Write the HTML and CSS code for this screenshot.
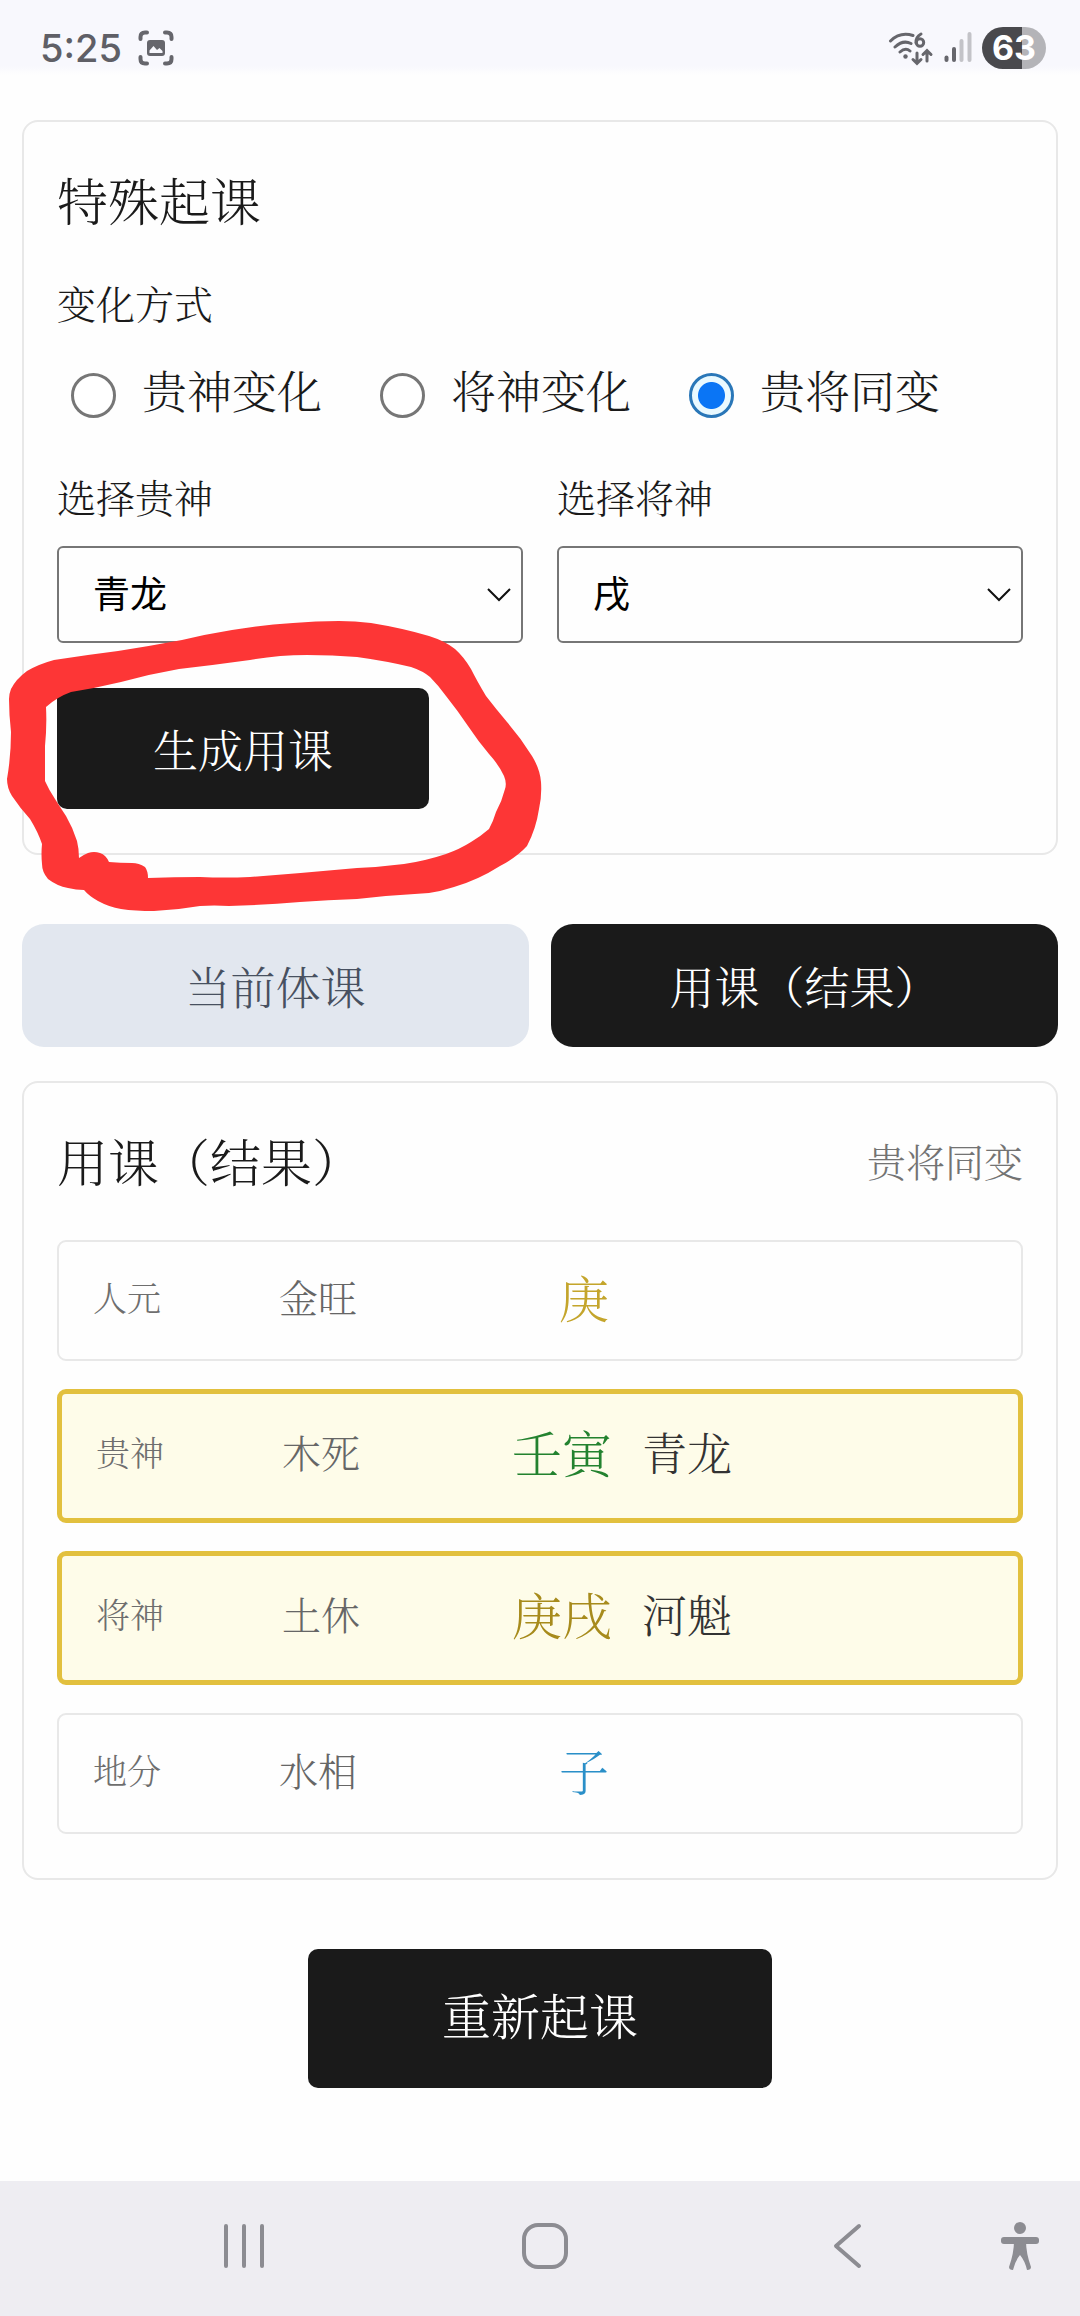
FILE: index.html
```html
<!DOCTYPE html>
<html lang="zh-CN">
<head>
<meta charset="utf-8">
<meta name="viewport" content="width=device-width, initial-scale=1">
<title>特殊起课</title>
<link rel="stylesheet" href="styles.css">
</head>
<body>
<header class="status">
  <div class="status-group">
    <span class="clock">5:25</span>
    <svg class="capture-icon" width="36" height="36" viewBox="0 0 36 36" fill="none" stroke="#66666c" stroke-width="4" stroke-linecap="round" aria-hidden="true">
      <path d="M2.500 9V7Q2.500 2.500 7 2.500H9M27 2.500h2Q33.500 2.500 33.500 7V9M33.500 27v2Q33.500 33.500 29 33.500H27M9 33.500H7Q2.500 33.500 2.500 29V27"/>
      <rect x="9" y="10" width="18" height="16" rx="3" fill="#66666c" stroke="none"/>
      <path d="M11.500 23V20.500L15.500 16L19 20L21.500 18L24.500 21V23Z" fill="#f8f8fd" stroke="none"/>
    </svg>
  </div>
  <div class="status-group status-right">
    <svg width="46" height="36" viewBox="0 0 46 36" fill="none" stroke="#66666c" stroke-width="3" stroke-linecap="round" aria-hidden="true">
      <path d="M2.500 11Q12 1.500 25 5.500M7 17Q15 9.500 23 13.500M12 22Q17.500 17 22 21"/>
      <circle cx="17.500" cy="26.500" r="2.200" fill="#66666c" stroke="none"/>
      <path d="M33 4Q27.500 7 28 13"/><circle cx="32" cy="12.500" r="3.700"/>
      <path d="M29 23V33M25 29.500L29 33.500L33 29.500M39 31V21M35 24.500L39 20.500L43 24.500"/>
    </svg>
    <svg width="28" height="36" viewBox="0 0 28 36" stroke-width="4" stroke-linecap="round" aria-hidden="true">
      <path d="M2.500 27.500V30" stroke="#66666c"/><path d="M10 19V30" stroke="#66666c"/>
      <path d="M17.500 11V30M25.500 4V30" stroke="#c3c3c8"/>
    </svg>
    <span class="battery">63</span>
  </div>
</header>

<main class="page">
  <form class="card setup">
    <h2 class="title">特殊起课</h2>
    <fieldset class="modes">
      <legend class="caption">变化方式</legend>
      <div class="mode-list">
        <label class="mode"><input class="radio" type="radio" name="mode">贵神变化</label>
        <label class="mode"><input class="radio" type="radio" name="mode">将神变化</label>
        <label class="mode"><input class="radio" type="radio" name="mode" checked>贵将同变</label>
      </div>
    </fieldset>
    <div class="fields">
      <div class="field">
        <label class="caption" for="gui">选择贵神</label>
        <div class="select-box">
          <select class="select" id="gui"><option>青龙</option></select>
          <svg class="chevron" width="24" height="14" viewBox="0 0 24 14" aria-hidden="true"><path d="M1 1L12 12L23 1"/></svg>
        </div>
      </div>
      <div class="field">
        <label class="caption" for="jiang">选择将神</label>
        <div class="select-box">
          <select class="select" id="jiang"><option>戌</option></select>
          <svg class="chevron" width="24" height="14" viewBox="0 0 24 14" aria-hidden="true"><path d="M1 1L12 12L23 1"/></svg>
        </div>
      </div>
    </div>
    <button class="btn" type="button">生成用课</button>
    <svg class="marker" width="560" height="320" viewBox="0 0 560 320" aria-hidden="true">
      <path fill-rule="evenodd" d="M9 100Q9 95 11 90Q16 80 27 72Q39 65 54 61Q86 56 118 52Q150 47 182 41Q207 35 232 31Q262 26 293 24Q316 22 339 22Q355 22 371 24Q402 29 429 37Q445 42 455 50Q464 58 471 70Q477 82 486 97Q496 110 507 123Q521 139 532 157Q540 170 541 183Q542 197 539 210Q536 230 527 247Q517 258 500 267Q478 281 454 288Q442 292 429 294Q393 296 357 300Q328 301 300 303Q264 306 229 307Q214 306 200 307Q177 311 154 312Q135 312 121 310Q109 308 98 302Q89 297 84 291Q76 291 68 289Q57 287 48 280Q42 273 42 265Q41 255 42 245Q38 233 30 220Q20 209 12 197Q7 189 7 180Q11 157 11 133Q9 116 9 100Z
      M46 108Q57 98 71 93Q96 89 121 83Q150 75 179 70Q214 66 250 61Q278 56 307 56Q332 56 357 58Q386 62 411 68Q423 72 430 78Q438 86 446 97Q458 112 468 127Q478 142 489 155Q499 166 504 177Q507 184 505 190Q502 202 496 213Q493 223 489 230Q481 237 471 243Q460 250 446 255Q425 262 404 265Q380 268 357 269Q303 274 250 278Q225 279 200 278Q174 278 148 279Q148 272 145 268Q139 264 132 264Q120 264 109 263Q106 256 100 254Q94 252 88 254Q83 256 79 259Q79 250 77 242Q73 229 66 217Q60 208 55 200Q49 191 45 182Q45 164 45 147Q47 127 46 108Z"/>
    </svg>
  </form>

  <div class="tabs" role="tablist">
    <button class="tab" type="button" role="tab" aria-selected="false">当前体课</button>
    <button class="tab tab-active" type="button" role="tab" aria-selected="true">用课（结果）</button>
  </div>

  <section class="card">
    <div class="card-head">
      <h2 class="title">用课（结果）</h2>
      <span class="caption muted">贵将同变</span>
    </div>
    <ul class="rows">
      <li class="row"><span class="pos">人元</span><span class="state">金旺</span><span class="stem gold">庚</span></li>
      <li class="row row-changed"><span class="pos">贵神</span><span class="state">木死</span><span class="stem green">壬寅</span><span class="spirit">青龙</span></li>
      <li class="row row-changed"><span class="pos">将神</span><span class="state">土休</span><span class="stem earth">庚戌</span><span class="spirit">河魁</span></li>
      <li class="row"><span class="pos">地分</span><span class="state">水相</span><span class="stem blue">子</span></li>
    </ul>
  </section>

  <button class="btn btn-restart" type="button">重新起课</button>
</main>

<nav class="navbar">
  <button class="nav-btn" type="button" aria-label="最近任务">
    <svg width="42" height="46" viewBox="0 0 42 46"><path d="M3 3V43M21 3V43M39 3V43" stroke-width="4"/></svg>
  </button>
  <button class="nav-btn" type="button" aria-label="主屏幕">
    <svg width="46" height="46" viewBox="0 0 46 46"><rect x="2" y="2" width="42" height="42" rx="14" stroke-width="4"/></svg>
  </button>
  <button class="nav-btn" type="button" aria-label="返回">
    <svg width="30" height="46" viewBox="0 0 30 46"><path d="M27 3L4 23L27 43" stroke-width="4"/></svg>
  </button>
  <button class="nav-btn" type="button" aria-label="无障碍">
    <svg width="40" height="50" viewBox="0 0 40 50"><g fill="#8c8c92" stroke="none"><circle cx="20" cy="7" r="6"/><rect x="1" y="16" width="38" height="7" rx="3"/><path d="M14 20H26Q26 32 31 46Q31 49 27 49Q25 40 20 34Q15 40 13 49Q9 49 9 46Q14 32 14 20Z"/></g></svg>
  </button>
</nav>
</body>
</html>
```
FILE: styles.css
```css
* {
  box-sizing: border-box;
}

body {
  margin: 0;
  min-height: 100vh;
  display: flex;
  flex-direction: column;
  background: #fefefe;
  color: #1a1a1a;
  font-family: "Noto Serif CJK SC", "Noto Serif SC", "Noto Sans CJK SC", serif;
  font-size: 45px;
  font-weight: 300;
  line-height: 81px;
}

button,
input,
select {
  font: inherit;
  color: inherit;
  margin: 0;
}

svg {
  display: block;
}

/* Status bar */
.status {
  height: 75px;
  padding: 22px 34px 0 40px;
  display: flex;
  align-items: flex-start;
  justify-content: space-between;
  background: linear-gradient(#f8f8fd 88%, #fefefe);
  color: #5f5f66;
  font-family: Inter, sans-serif;
  line-height: 52px;
}

.status-group {
  display: flex;
  align-items: center;
  gap: 16px;
  height: 52px;
}

.status-right {
  gap: 10px;
}

.clock {
  font-size: 38px;
  font-weight: 500;
}

.battery {
  width: 64px;
  height: 42px;
  border-radius: 21px;
  background: linear-gradient(90deg, #49494d 62%, #b4b4b8 62%);
  color: #fff;
  font-size: 34px;
  font-weight: 700;
  line-height: 42px;
  text-align: center;
}

/* Page */
.page {
  flex: 1;
  padding: 45px 22px 93px;
  display: flex;
  flex-direction: column;
}

.card {
  position: relative;
  padding: 31px 33px 44px;
  border: 2px solid #e8e8e8;
  border-radius: 16px;
}

.title {
  margin: 0;
  font-size: 51px;
  font-weight: 300;
  line-height: 92px;
}

.caption {
  display: block;
  padding: 0;
  font-size: 39px;
  line-height: 71px;
}

.muted {
  color: #737373;
}

.modes {
  margin: 22px 0 31px;
  padding: 0;
  border: 0;
  min-width: 0;
}

.mode-list {
  margin-top: 11px;
  display: flex;
  flex-wrap: wrap;
  gap: 0 44px;
}

.mode {
  display: flex;
  align-items: center;
}

.radio {
  appearance: none;
  width: 45px;
  height: 45px;
  margin: 12px 26px 0 14px;
  border: 3px solid #767676;
  border-radius: 50%;
  background: #fff;
}

.radio:checked {
  border-color: #2a77b8;
  background: radial-gradient(circle, #0a75f5 13px, #e9f9ff 14px);
}

.fields {
  display: grid;
  grid-template-columns: 1fr 1fr;
  gap: 34px;
  margin-bottom: 45px;
}

.select-box {
  display: grid;
  align-items: center;
  margin-top: 14px;
}

.select {
  grid-area: 1 / 1;
  appearance: none;
  width: 100%;
  height: 97px;
  padding: 0 34px 5px;
  border: 2px solid #767676;
  border-radius: 6px;
  background: #fefefe;
  color: #000;
  font-family: "Noto Sans CJK SC", sans-serif;
  font-size: 37px;
  font-weight: 400;
}

.chevron {
  grid-area: 1 / 1;
  justify-self: end;
  margin-right: 12px;
  fill: none;
  stroke: #111;
  stroke-width: 2;
  pointer-events: none;
}

.btn {
  display: block;
  padding: 20px 96px;
  border: 0;
  border-radius: 10px;
  background: #1a1a1a;
  color: #fff;
}

.btn-restart {
  align-self: center;
  margin-top: 69px;
  padding: 20px 134px 28px;
  font-size: 49px;
  line-height: 91px;
}

.marker {
  position: absolute;
  left: -24px;
  bottom: -66px;
  fill: #fd3636;
  pointer-events: none;
}

/* Tabs */
.tabs {
  display: grid;
  grid-template-columns: 1fr 1fr;
  gap: 22px;
  margin: 69px 0 34px;
}

.tab {
  padding: 21px 0;
  border: 0;
  border-radius: 22px;
  background: #e2e7ef;
  color: #475060;
}

.tab-active {
  background: #1a1a1a;
  color: #fff;
}

/* Result */
.card-head {
  display: flex;
  align-items: center;
  justify-content: space-between;
  margin-bottom: 34px;
}

.rows {
  display: grid;
  gap: 28px;
  margin: 0;
  padding: 0;
  list-style: none;
}

.row {
  display: grid;
  grid-template-columns: 186px 130px 200px 1fr;
  align-items: center;
  padding: 14px 34px 22px;
  border: 2px solid #e8e8e8;
  border-radius: 9px;
}

.row-changed {
  padding: 17px 34px 26px;
  border: 5px solid #e2c03e;
  background: #fefce9;
}

.pos {
  color: #6e6e6e;
  font-size: 34px;
}

.state {
  color: #666;
  font-size: 39px;
}

.stem {
  font-size: 50px;
  text-align: right;
}

.spirit {
  padding-left: 30px;
  color: #333;
}

.gold {
  color: #c4a52c;
}

.green {
  color: #23822f;
}

.earth {
  color: #a78b1c;
}

.blue {
  color: #2a8fc8;
}

/* System navigation */
.navbar {
  display: grid;
  grid-template-columns: 1fr 1fr 1fr 44px;
  height: 135px;
  padding: 0 38px 6px 93px;
  background: #eeedf2;
}

.nav-btn {
  display: flex;
  align-items: center;
  justify-content: center;
  padding: 0;
  border: 0;
  background: none;
}

.nav-btn svg {
  flex: none;
  fill: none;
  stroke: #8c8c92;
  stroke-linecap: round;
  stroke-linejoin: round;
}
```
